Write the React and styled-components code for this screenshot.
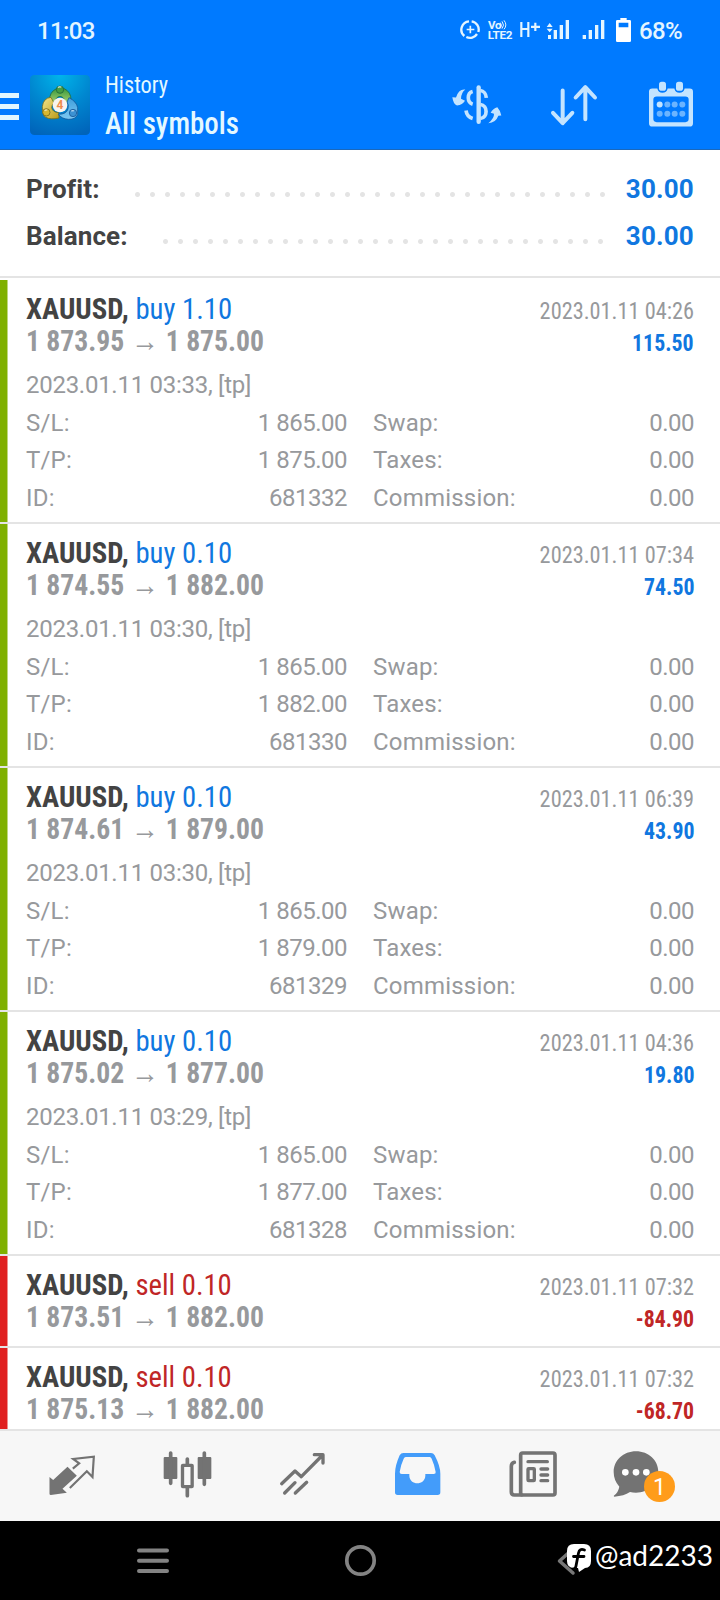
import React from "react"
import styled, { createGlobalStyle } from 'styled-components';

const GlobalStyle = createGlobalStyle`
    * { box-sizing: border-box; }
    body {
        margin: 0;
        background: #fff;
        font-family: Roboto, "Liberation Sans", sans-serif;
    }
    svg { display: block; flex: none; }
`

const orders = [
    { type: 'buy', volume: '1.10', open: '1 873.95', close: '1 875.00', closed: '2023.01.11 04:26', profit: '115.50', opened: '2023.01.11 03:33', sl: '1 865.00', id: '681332' },
    { type: 'buy', volume: '0.10', open: '1 874.55', close: '1 882.00', closed: '2023.01.11 07:34', profit: '74.50', opened: '2023.01.11 03:30', sl: '1 865.00', id: '681330' },
    { type: 'buy', volume: '0.10', open: '1 874.61', close: '1 879.00', closed: '2023.01.11 06:39', profit: '43.90', opened: '2023.01.11 03:30', sl: '1 865.00', id: '681329' },
    { type: 'buy', volume: '0.10', open: '1 875.02', close: '1 877.00', closed: '2023.01.11 04:36', profit: '19.80', opened: '2023.01.11 03:29', sl: '1 865.00', id: '681328' },
    { type: 'sell', volume: '0.10', open: '1 873.51', close: '1 882.00', closed: '2023.01.11 07:32', profit: '-84.90' },
    { type: 'sell', volume: '0.10', open: '1 875.13', close: '1 882.00', closed: '2023.01.11 07:32', profit: '-68.70' },
]

const StatusIcons = () => (
    <>
        <svg width="24" height="30" viewBox="300 45 72 90" fill="none" stroke="#e4f5ff">
            <path d="M327 64a25 25 0 0 0-14 44M319 111a25 25 0 0 0 32-9M355 96a25 25 0 0 0-20-32" strokeWidth="7" />
            <path d="M331 77v23M320 88.500h23" strokeWidth="5" />
        </svg>
        <svg width="32" height="30" viewBox="372 45 96 90" fill="#e4f5ff" fontFamily="Roboto, sans-serif" fontWeight="700">
            <text x="384" y="86" fontSize="31" textLength="40" lengthAdjust="spacingAndGlyphs">Vo</text>
            <path d="M421 68q6 8 0 15M426 64q9 12 0 22M432 61q11 14 0 27" fill="none" stroke="#e4f5ff" strokeWidth="3" />
            <text x="383" y="117" fontSize="33" textLength="74" lengthAdjust="spacingAndGlyphs">LTE2</text>
        </svg>
        <svg width="28" height="30" viewBox="468 45 84 90" fill="none" stroke="#e4f5ff" strokeWidth="6.500">
            <path d="M484 66v45M505 66v45M484 87h21M526 68v25M513 80.500h27" />
        </svg>
        <svg width="32" height="30" viewBox="552 45 96 90" fill="#e4f5ff">
            <path d="M569 69l9 12h-18zM569 97l9-11h-18zM564 105h9v12h-9zM581 90h10v27h-10zM599 75h10v42h-10zM617 60h10v57h-10z" />
        </svg>
        <svg width="34" height="30" viewBox="648 45 102 90" fill="#e4f5ff">
            <path d="M668 105h10v12h-10zM686 90h10v27h-10zM705 75h10v42h-10zM723 60h10v57h-10z" />
        </svg>
        <svg width="26" height="30" viewBox="750 45 78 90" fill="#fff">
            <path fillRule="evenodd" d="M781 54h19v6h9q4 0 4 4v58q0 4-4 4h-37q-4 0-4-4v-58q0-4 4-4h9zM776 68v14h29v-14z" />
        </svg>
    </>
)

const AppLogo = () => (
    <svg width="60" height="60" viewBox="90 225 180 180">
        <defs>
            <radialGradient id="tile" cx=".5" cy="0" r="1.05">
                <stop offset="0" stopColor="#00b4ea" />
                <stop offset=".5" stopColor="#0087d0" />
                <stop offset="1" stopColor="#0064ba" />
            </radialGradient>
            <linearGradient id="green" x2="0" y2="1">
                <stop offset="0" stopColor="#3b9a3f" />
                <stop offset="1" stopColor="#a4cf6d" />
            </linearGradient>
            <linearGradient id="yellow" x2="1" y2="1">
                <stop offset="0" stopColor="#f4e68a" />
                <stop offset="1" stopColor="#bb9a18" />
            </linearGradient>
            <linearGradient id="blue" x2="0" y2="1">
                <stop offset="0" stopColor="#3f9fdc" />
                <stop offset="1" stopColor="#7cc8f2" />
            </linearGradient>
        </defs>
        <rect x="90" y="225" width="180" height="180" rx="13" fill="url(#tile)" />
        <g strokeWidth="2.500">
            <path d="M149 300q-1-23 20-34h24q20 10 20 34l-16 8q-5-18-17-19-13 1-15 19z" fill="url(#green)" stroke="#236c3b" />
            <path d="M153 292q-23 2-26 28-1 24 10 32 15 8 40 2l-1-16q-18-1-21-15 0-8 7-14z" fill="url(#yellow)" stroke="#75701d" />
            <path d="M207 293q23 12 26 30v20q-5 15-27 15-21-1-31-15 25 0 29-17 3-12-3-20z" fill="url(#blue)" stroke="#14599c" />
            <circle cx="180" cy="269" r="11" fill="#479d42" stroke="#21683a" />
            <circle cx="139" cy="337" r="11" fill="#d7b72f" stroke="#776b1c" />
            <circle cx="219" cy="339" r="11" fill="#3b91d2" stroke="#1b5998" />
        </g>
        <path d="M174 263q5-5 10-1M134 332q4-4 8-1M214 334q4-4 8-1" fill="none" stroke="#fff" strokeWidth="4" opacity=".65" />
        <circle cx="180" cy="315" r="22" fill="#f8f4ef" />
        <text x="180" y="328" textAnchor="middle" fontFamily="Roboto, sans-serif" fontSize="36" fontWeight="700" fill="#ef8c4c">4</text>
    </svg>
)

const HeaderIcons = () => (
    <HeaderActions>
        <svg width="60" height="60" viewBox="262 223.500 180 180" fill="none" stroke="#c4e4ff" strokeWidth="11">
            <path d="M357 261v103" strokeWidth="13" strokeLinecap="round" />
            <path d="M339 273c-18 5-17 33 0 38M319 330c2 15 10 21 20 24M362 270c10 1 17 10 18 22M362 312c23 3 23 39 0 42" />
            <path d="M317 267q-20-3-28 24l-11-1q3 21 14 25 17-2 24-14l-12-6q0-18 13-28zM386 368q18-14 17-28l-10-3q7-14 20-17 8 8 12 25l-9 1q-8 22-30 22z" fill="#c4e4ff" stroke="none" />
        </svg>
        <svg width="60" height="60" viewBox="552 223.500 180 180" fill="none" stroke="#c4e4ff" strokeWidth="12" strokeLinecap="round" strokeLinejoin="round">
            <path d="M608 270v97M579 337l29 31 29-31M676 356v-95M647 291l29-31 29 31" />
        </svg>
        <svg width="60" height="60" viewBox="843 223.500 180 180" fill="#c4e4ff">
            <path fillRule="evenodd" d="M877 264h15q3 13 15 13 13 0 16-13h20q3 13 15 13 13 0 16-13h15q10 0 10 10v94q0 10-10 10H877q-10 0-10-10v-94q0-10 10-10zM890 288q-10 0-10 10v57q0 10 10 10h86q10 0 10-10v-57q0-10-10-10z" />
            <rect x="897" y="244" width="21" height="27" rx="8" />
            <rect x="948" y="244" width="21" height="27" rx="8" />
            <circle cx="899" cy="312" r="9" />
            <g opacity=".55">
                <circle cx="922" cy="312" r="9" />
                <circle cx="944" cy="312" r="9" />
                <circle cx="967" cy="312" r="9" />
                <circle cx="899" cy="340" r="9" />
                <circle cx="922" cy="340" r="9" />
                <circle cx="944" cy="340" r="9" />
                <circle cx="967" cy="340" r="9" />
            </g>
        </svg>
    </HeaderActions>
)

const Order = ({ order }) => (
    <OrderRow $type={order.type}>
        <OrderLine>
            <Title><b>XAUUSD,</b> <Side $type={order.type}>{order.type} {order.volume}</Side></Title>
            <Time>{order.closed}</Time>
        </OrderLine>
        <OrderLine>
            <Prices>{order.open}<Arrow>→</Arrow>{order.close}</Prices>
            <Profit $type={order.type}>{order.profit}</Profit>
        </OrderLine>
        {order.id && (
            <>
                <Comment>{order.opened}, [tp]</Comment>
                <Details>
                    <Detail><span>S/L:</span><Num>{order.sl}</Num></Detail>
                    <Detail><span>Swap:</span><Num>0.00</Num></Detail>
                    <Detail><span>T/P:</span><Num>{order.close}</Num></Detail>
                    <Detail><span>Taxes:</span><Num>0.00</Num></Detail>
                    <Detail><span>ID:</span><Num>{order.id}</Num></Detail>
                    <Detail><span>Commission:</span><Num>0.00</Num></Detail>
                </Details>
            </>
        )}
    </OrderRow>
)

const TabBar = () => (
    <Tabs>
        <Tab>
            <svg width="60" height="60" viewBox="127.500 108 180 180" fill="#737373">
                <path d="M150 201l11 9 43-40 28 27-43 39 13 12-48 7q-4 0-4-4z" />
                <path d="M220 176l19-16-18-13 62-7-4 61-17-17-51 50" fill="none" stroke="#737373" strokeWidth="6.500" />
            </svg>
        </Tab>
        <Tab>
            <svg width="60" height="60" viewBox="471 108 180 180" fill="#737373">
                <rect x="491" y="141" width="41" height="66" rx="3" />
                <rect x="593" y="141" width="41" height="66" rx="3" />
                <path d="M512 129v91M613 129v94M562 147v18M562 232v25" stroke="#737373" strokeWidth="11" strokeLinecap="round" />
                <rect x="547.500" y="166" width="29" height="64" rx="1" fill="none" stroke="#737373" strokeWidth="10" />
            </svg>
        </Tab>
        <Tab>
            <svg width="60" height="60" viewBox="816 108 180 180" fill="none" stroke="#737373" strokeWidth="10" strokeLinecap="round" strokeLinejoin="round">
                <path d="M845 221l40-38 19 17 64-65M943 134h26v25M854 249l31-31M886 249l34-32" />
            </svg>
        </Tab>
        <Tab>
            <svg width="60" height="60" viewBox="81 108 180 180" fill="#439cfa">
                <path fillRule="evenodd" d="M130 129h83q7 0 11 7 17 33 17 55v56q0 8-8 8H113q-8 0-8-8v-56q0-24 14-55 4-7 11-7zM137 141q-4 0-6 5-9 19-12 40 0 6 6 6h23v5c1 30 47 30 48 0v-5h25q7 0 6-6-3-20-12-40-2-5-6-5z" />
            </svg>
        </Tab>
        <Tab>
            <svg width="60" height="60" viewBox="426 108 180 180" fill="none" stroke="#737373" strokeWidth="11" strokeLinecap="round">
                <rect x="482" y="129" width="103" height="126" rx="6" />
                <path d="M485 255h-22q-9 0-9-9v-77q0-10 9-12" />
                <path d="M504 155h58M543 177h20M543 195h20M543 212h20" strokeWidth="10" />
                <rect x="504" y="176" width="19" height="36" rx="2" strokeWidth="10" />
            </svg>
        </Tab>
        <Tab>
            <ChatIcon>
                <svg width="62" height="60" viewBox="759 108 186 180">
                    <path d="M828 124c38 0 67 27 67 62s-29 62-67 62q-10 0-18-2-18 12-47 14-4-1 0-4 12-10 15-26-17-19-17-44c0-35 29-62 67-62z" fill="#737373" />
                    <circle cx="796" cy="187" r="10" fill="#fff" />
                    <circle cx="828" cy="187" r="10" fill="#fff" />
                    <circle cx="859" cy="187" r="10" fill="#fff" />
                </svg>
                <Badge>1</Badge>
            </ChatIcon>
        </Tab>
    </Tabs>
)

const SystemBar = () => (
    <SystemNav>
        <svg width="40" height="40" viewBox="0 0 40 40" stroke="#838383" strokeWidth="4" strokeLinecap="round">
            <path d="M6 9.500h28M6 19.800h28M6 30h28" />
        </svg>
        <svg width="40" height="40" viewBox="0 0 40 40" fill="none" stroke="#838383" strokeWidth="3.700">
            <circle cx="20.500" cy="19.500" r="13.700" />
        </svg>
        <svg width="40" height="40" viewBox="0 0 40 40" fill="none" stroke="#777" strokeWidth="3.500" strokeLinecap="round" strokeLinejoin="round">
            <path d="M27 7L12.500 20 26 32" />
        </svg>
        <Watermark>
            <svg width="24" height="29" viewBox="0 0 24 29">
                <path d="M7 0h10q7 0 7 7v10q0 7-6 7l-6 4-1-4H7q-7 0-7-7V7q0-7 7-7z" fill="#fff" />
                <path d="M17.500 6q-5-2-6 3L9 22q-.5 3-2.500 3M6.500 12.500H17" fill="none" stroke="#000" strokeWidth="2.800" strokeLinecap="round" />
            </svg>
            <span>@ad2233</span>
        </Watermark>
    </SystemNav>
)

export default function App() {
    return (
        <Screen>
            <GlobalStyle />
            <StatusBar>
                <Clock>11:03</Clock>
                <StatusIcons />
                <Battery>68%</Battery>
            </StatusBar>
            <Header>
                <MenuButton><i /><i /><i /></MenuButton>
                <AppLogo />
                <Heading>
                    <SubTitle>History</SubTitle>
                    <MainTitle>All symbols</MainTitle>
                </Heading>
                <HeaderIcons />
            </Header>
            <Summary>
                <SummaryRow><SummaryLabel $width={104}>Profit:</SummaryLabel><Dots /><SummaryValue>30.00</SummaryValue></SummaryRow>
                <SummaryRow><SummaryLabel $width={132}>Balance:</SummaryLabel><Dots /><SummaryValue>30.00</SummaryValue></SummaryRow>
            </Summary>
            <List>
                {orders.map((order, i) => <Order key={i} order={order} />)}
            </List>
            <TabBar />
            <SystemBar />
        </Screen>
    )
}

const Screen = styled.div`
    display: flex;
    flex-direction: column;
    width: 720px;
    height: 1600px;
    overflow: hidden;
    background: #fff;
`

const StatusBar = styled.div`
    display: flex;
    align-items: center;
    flex: none;
    height: 60px;
    padding-left: 37px;
    background: #007aff;
    color: #e4f5ff;
    font-size: 24px;
    font-weight: 500;
    letter-spacing: -0.6px;
`

const Clock = styled.div`
    width: 423px;
    padding-top: 2px;
`

const Battery = styled.div`
    padding: 2px 0 0 3px;
`

const Header = styled.header`
    display: flex;
    align-items: center;
    flex: none;
    height: 90px;
    padding-right: 19px;
    background: #007aff;
    border-bottom: 1px solid #1b68bb;
    color: #e4f8ff;
`

const MenuButton = styled.div`
    display: grid;
    gap: 6px;
    width: 30px;
    padding-top: 4px;

    i {
        width: 19px;
        height: 5px;
        background: #e0f6ff;
    }
`

// the condensed cut is still a bit wide, so each use squeezes it further
const Narrow = styled.div`
    font-stretch: 75%;
    white-space: nowrap;
    transform: scaleX(${({ $squeeze = 0.93 }) => $squeeze});
    transform-origin: left;
`

const Heading = styled.div`
    flex: 1;
    padding-left: 15px;
`

const SubTitle = styled(Narrow)`
    font-size: 24px;
    line-height: 37px;
`

const MainTitle = styled(Narrow).attrs({ $squeeze: 0.905 })`
    font-size: 32px;
    font-weight: 500;
    line-height: 38px;
`

const HeaderActions = styled.div`
    display: flex;
    gap: 37px;
`

const Summary = styled.section`
    flex: none;
    height: 128px;
    padding: 16px 26px 0;
    border-bottom: 2px solid #e4e4e4;
`

const SummaryRow = styled.div`
    display: flex;
    height: 47px;
    font-size: 26px;
    font-weight: 700;
    line-height: 47px;
`

const SummaryLabel = styled.div`
    width: ${({ $width }) => $width}px;
    color: #434343;
    letter-spacing: 0.1px;
`

const Dots = styled.div`
    flex: 1;
    background: radial-gradient(circle at 7.5px 28.5px, #e4e4e4 2px, transparent 3px) 0 0 / 15px 47px repeat-x;
`

const SummaryValue = styled.div`
    width: 84px;
    color: #1077e0;
    letter-spacing: 0.2px;
    text-align: right;
`

const List = styled.main`
    flex: 1;
    min-height: 0;
    padding-top: 2px;
    overflow: hidden;
`

const OrderRow = styled.article`
    height: ${({ $type }) => $type === 'buy' ? 244 : 92}px;
    padding: 13px 26px 0;
    border-bottom: 2px solid #e4e4e4;
    background: linear-gradient(${({ $type }) => $type === 'buy' ? '#7fb000, #7fb000' : '#e02020, #e02020'}) 0 0 / 7.5px 100% no-repeat;
    color: #97999c;
`

const OrderLine = styled.div`
    display: flex;
    justify-content: space-between;
    height: 32px;
    line-height: 32px;
`

const Title = styled(Narrow).attrs({ $squeeze: 0.957 })`
    color: #434343;
    font-size: 30px;
`

const Side = styled.span`
    color: ${({ $type }) => $type === 'buy' ? '#1077e0' : '#c02626'};
`

const Time = styled(Narrow)`
    padding-top: 2px;
    font-size: 24px;
    transform-origin: right;
`

const Prices = styled(Narrow).attrs({ $squeeze: 0.922 })`
    font-size: 30px;
    font-weight: 700;
`

const Arrow = styled.span`
    display: inline-block;
    width: 45px;
    font-family: "Liberation Sans", sans-serif;
    font-size: 30px;
    font-weight: 400;
    line-height: 20px;
    text-align: center;
`

const Profit = styled(Narrow).attrs({ $squeeze: 0.91 })`
    padding-top: 2px;
    color: ${({ $type }) => $type === 'buy' ? '#1077e0' : '#c02626'};
    font-size: 24px;
    font-weight: 700;
    transform-origin: right;
`

const Comment = styled.div`
    margin-top: 9px;
    font-size: 24px;
    letter-spacing: -0.27px;
    line-height: 38px;
`

const Details = styled.div`
    display: grid;
    grid-template-columns: 1fr 1fr;
    column-gap: 26px;
    padding-top: 0.5px;
    font-size: 24px;
    letter-spacing: 0.2px;
    line-height: 37.5px;
`

const Detail = styled.div`
    display: flex;
    justify-content: space-between;
`

const Num = styled.span`
    letter-spacing: -0.5px;
`

const Tabs = styled.nav`
    display: grid;
    grid-template-columns: repeat(6, 115px);
    flex: none;
    height: 92px;
    padding: 0 14.5px;
    border-top: 2px solid #e4e4e4;
    background: #f7f7f7;
`

const Tab = styled.div`
    display: flex;
    align-items: center;
    justify-content: center;
`

const ChatIcon = styled.div`
    position: relative;
    margin-right: 6px;
`

const Badge = styled.div`
    position: absolute;
    right: 0;
    bottom: 4px;
    width: 31px;
    height: 31px;
    border-radius: 50%;
    background: #ff9c1a;
    color: #fff;
    font-size: 23px;
    line-height: 33px;
    text-align: center;
`

const SystemNav = styled.footer`
    position: relative;
    display: grid;
    grid-template-columns: repeat(3, 1fr);
    place-items: center;
    flex: none;
    height: 79px;
    padding: 0 50px;
    background: #000;
`

const Watermark = styled.div`
    position: absolute;
    top: 23px;
    left: 567px;
    display: flex;
    align-items: flex-start;
    gap: 4px;
    color: #fff;
    font-family: Lato, sans-serif;
    font-size: 28px;
    line-height: 23px;
`
